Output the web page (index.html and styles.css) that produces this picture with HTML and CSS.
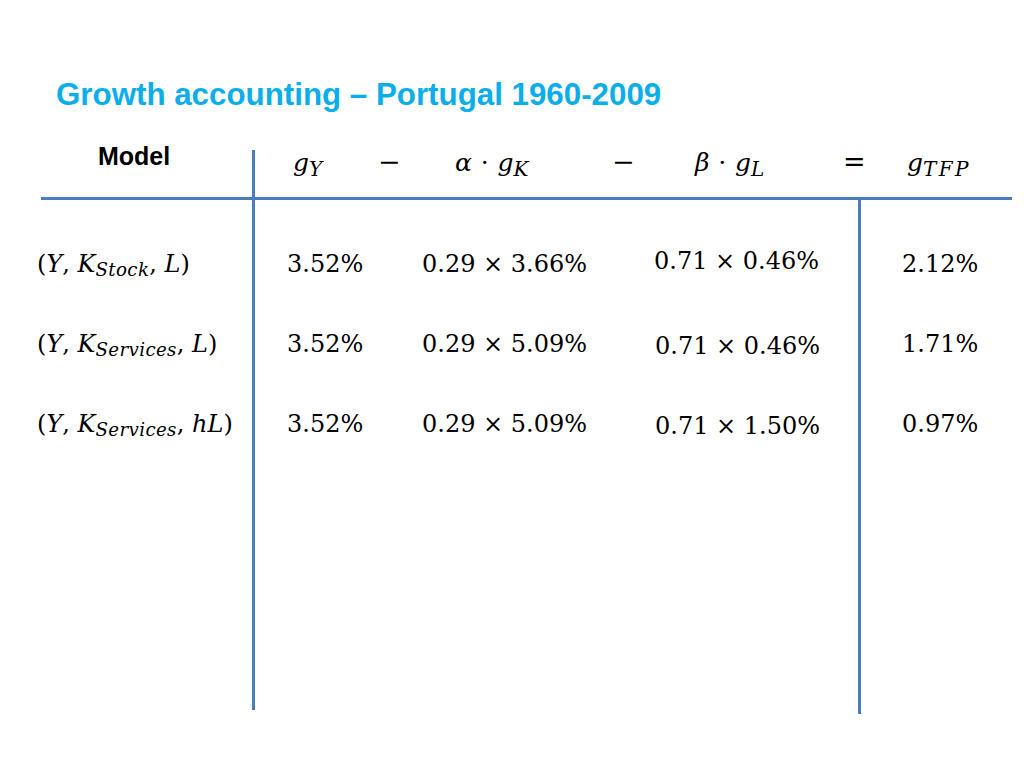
FILE: index.html
```html
<!DOCTYPE html>
<html lang="en">
<head>
<meta charset="utf-8">
<title>Growth accounting – Portugal 1960-2009</title>
<link rel="stylesheet" href="styles.css">
</head>
<body>
<div class="slide">
  <h1 class="title">Growth accounting – Portugal 1960-2009</h1>
  <div class="table">
    <div class="head">
      <div class="head-label">Model</div>
      <div class="vline vline-top"></div>
      <div class="head-math math">
        <span class="hm hm-gy"><i>g</i><sub><i>Y</i></sub></span>
        <span class="hm hm-op hm-op1">−</span>
        <span class="hm hm-gk"><i>α</i><span class="dot">⋅</span><i>g</i><sub><i>K</i></sub></span>
        <span class="hm hm-op hm-op2">−</span>
        <span class="hm hm-gl"><i>β</i><span class="dot">⋅</span><i>g</i><sub><i>L</i></sub></span>
        <span class="hm hm-op hm-eq">=</span>
        <span class="hm hm-tfp"><i>g</i><sub class="wide"><i>TFP</i></sub></span>
      </div>
    </div>
    <div class="hline"></div>
    <div class="body">
      <div class="labels math">
        <div class="row">(<i>Y</i>, <i>K</i><sub><i>Stock</i></sub>, <i>L</i>)</div>
        <div class="row">(<i>Y</i>, <i>K</i><sub><i>Services</i></sub>, <i>L</i>)</div>
        <div class="row">(<i>Y</i>, <i>K</i><sub><i>Services</i></sub>, <i>hL</i>)</div>
      </div>
      <div class="vline vline-main"></div>
      <div class="vals math">
        <div class="cell">3.52%</div>
        <div class="cell">0.29 × 3.66%</div>
        <div class="cell cell-up">0.71 × 0.46%</div>
        <div class="cell">3.52%</div>
        <div class="cell">0.29 × 5.09%</div>
        <div class="cell cell-down">0.71 × 0.46%</div>
        <div class="cell">3.52%</div>
        <div class="cell">0.29 × 5.09%</div>
        <div class="cell cell-down">0.71 × 1.50%</div>
      </div>
      <div class="vline vline-tfp"></div>
      <div class="tfp math">
        <div class="cell">2.12%</div>
        <div class="cell">1.71%</div>
        <div class="cell">0.97%</div>
      </div>
    </div>
  </div>
</div>
</body>
</html>
```

FILE: styles.css
```css
html, body {
  margin: 0;
  padding: 0;
  background: #ffffff;
}

.slide {
  width: 1024px;
  height: 768px;
  overflow: hidden;
  box-sizing: border-box;
  padding-top: 77px;
  color: #000000;
}

.title {
  margin: 0 0 0 56px;
  font-family: "Liberation Sans", Arial, sans-serif;
  font-weight: bold;
  font-size: 31.3px;
  line-height: 36px;
  color: #0AAEEA;
  white-space: nowrap;
}

.table {
  margin-top: 27px;
  margin-left: 37px;
  width: 975px;
}

.math {
  font-family: "DejaVu Serif", serif;
  font-size: 24px;
}

.math i {
  font-style: italic;
}

.math sub {
  font-size: 0.76em;
  vertical-align: -0.24em;
  line-height: 0;
  letter-spacing: 0.02em;
}

.vline {
  width: 3px;
  background: #4A7EBB;
}

.head {
  display: grid;
  grid-template-columns: 215px 3px 1fr;
  height: 57px;
}

.head-label {
  font-family: "Liberation Sans", Arial, sans-serif;
  font-weight: bold;
  font-size: 25px;
  line-height: 28px;
  padding-top: 2px;
  padding-left: 61px;
}

.vline-top {
  margin-top: 10px;
}

.head-math {
  display: flex;
  align-items: baseline;
  padding-top: 8px;
  padding-left: 38px;
  line-height: 28px;
  font-size: 25px;
  white-space: nowrap;
}

.head-math sub {
  font-size: 0.8em;
}

.head-math sub.wide {
  letter-spacing: 0.12em;
}

.dot {
  margin: 0 0.34em;
}

.hm-op {
  font-size: 27px;
  font-weight: 300;
}

.hm-gy { width: 85px; }
.hm-op1 { width: 77px; }
.hm-gk { width: 157px; }
.hm-op2 { width: 83px; }
.hm-gl { width: 148px; }
.hm-eq { width: 64px; }

.hline {
  height: 3px;
  margin-left: 4px;
  background: #4A7EBB;
}

.body {
  display: flex;
  align-items: flex-start;
}

.labels {
  width: 215px;
  padding-top: 24px;
  white-space: nowrap;
}

.row, .cell {
  line-height: 80px;
  white-space: nowrap;
}

.cell-up {
  margin: -3px 0 3px -2px;
}

.cell-down {
  margin: 2px 0 -2px -1px;
}

.vline-main {
  height: 510px;
}

.vals {
  display: grid;
  grid-template-columns: 135px 234px 202px;
  padding-top: 24px;
  padding-left: 32px;
}

.vline-tfp {
  height: 514px;
}

.tfp {
  padding-top: 24px;
  padding-left: 41px;
}
```
